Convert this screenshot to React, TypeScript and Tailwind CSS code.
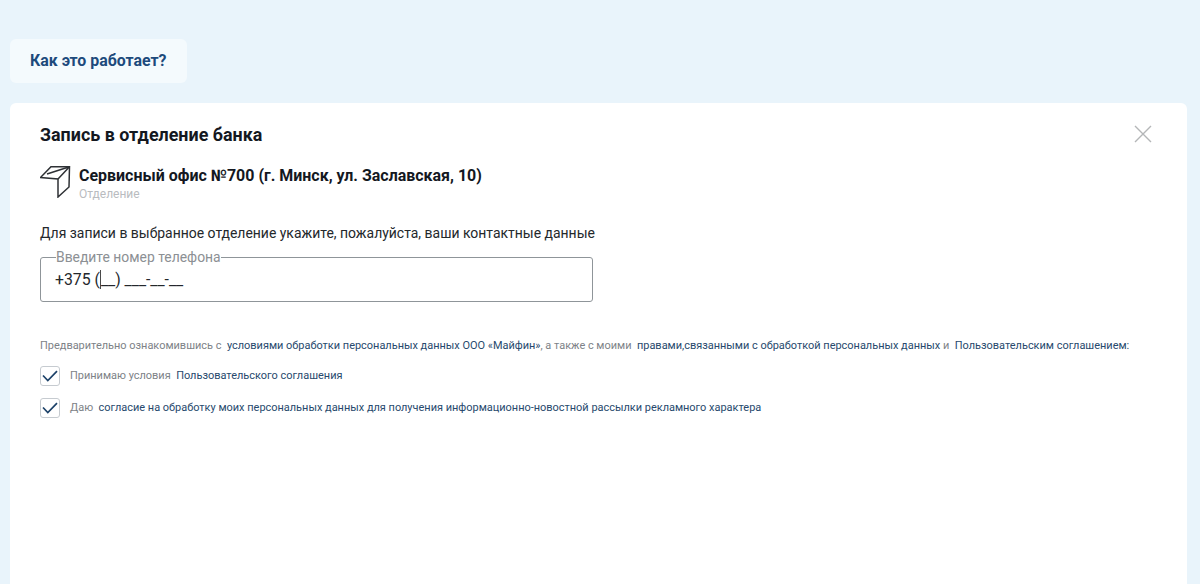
export default function App() {
  const link = "text-[#27496d]";
  return (
    <div className="h-[584px] w-[1200px] overflow-hidden bg-[#e9f4fb] pl-[10px] pr-[13px] pt-[39px] font-['Roboto',sans-serif]">
      <div className="flex h-[44px] w-[177px] items-center rounded-[6px] bg-[#f4fafd] pl-[20px] text-[15.9px] font-bold text-[#1d4a7c]">
        Как это работает?
      </div>
      <div className="mt-[20px] h-[490px] rounded-[6px] bg-white pl-[30px] pr-[35px] pt-[21px]">
        <div className="flex items-start justify-between">
          <h1 className="text-[17.9px] font-bold leading-[22px] text-[#14181f]">Запись в отделение банка</h1>
          <svg width="18" height="18" viewBox="0 0 18 18" className="mt-[1px]" fill="none" stroke="#b4b6b8" strokeWidth="1.4">
            <path d="M1 1L17 17M17 1L1 17" />
          </svg>
        </div>
        <div className="mt-[20px] flex items-start">
          <svg width="31" height="32" viewBox="0 0 31 32" className="shrink-0" fill="none" stroke="#2e3135" strokeWidth="1.5" strokeLinejoin="miter">
            <path d="M0.5 11.5L11 0.7H29.5L29 21L18 31V13L0.5 11.5Z" />
            <path d="M18 13L29.5 0.7L7 8" />
          </svg>
          <div className="ml-[8px]">
            <div className="text-[15.97px] font-bold leading-[20px] text-[#14181f]">Сервисный офис №700 (г. Минск, ул. Заславская, 10)</div>
            <div className="text-[12px] leading-[16px] text-[#b9bcbf]">Отделение</div>
          </div>
        </div>
        <p className="mt-[21px] text-[13.96px] leading-[20px] text-[#24282c]">
          Для записи в выбранное отделение укажите, пожалуйста, ваши контактные данные
        </p>
        <fieldset className="mt-[7px] h-[52px] w-[553px] rounded-[3px] border border-[#8f9599] pl-[14px]">
          <legend className="ml-[1px] text-[13.9px] leading-[14px] text-[#8c9094]">Введите номер телефона</legend>
          <div className="mt-[4px] text-[15.8px] leading-[24px] text-[#24282c]">+375 (<span className="border-l border-[#4a4a4a]">__</span>) ___-__-__</div>
        </fieldset>
        <p className="mt-[37px] whitespace-nowrap text-[10.96px] leading-[14px] text-[#7d8287]">
          Предварительно ознакомившись с&nbsp; <span className={link}>условиями обработки персональных данных ООО «Майфин»</span>, а также с моими&nbsp; <span className={link}>правами,связанными с обработкой персональных данных</span> и&nbsp; <span className={link}>Пользовательским соглашением:</span>
        </p>
        <div className="mt-[13px] flex items-center">
          <Check />
          <span className="ml-[10px] text-[10.96px] text-[#7d8287]">Принимаю условия&nbsp; <span className={link}>Пользовательского соглашения</span></span>
        </div>
        <div className="mt-[12px] flex items-center">
          <Check />
          <span className="ml-[10px] text-[10.96px] text-[#7d8287]">Даю&nbsp; <span className={link}>согласие на обработку моих персональных данных для получения информационно-новостной рассылки рекламного характера</span></span>
        </div>
      </div>
    </div>
  );
}

function Check() {
  return (
    <span className="flex h-[20px] w-[20px] items-center justify-center rounded-[3px] border border-[#c6cbd0] bg-white">
      <svg width="16" height="12" viewBox="0 0 16 12" fill="none" stroke="#1d4269" strokeWidth="1.7">
        <path d="M1 5.5L5.8 10.5L15 1.2" />
      </svg>
    </span>
  );
}
